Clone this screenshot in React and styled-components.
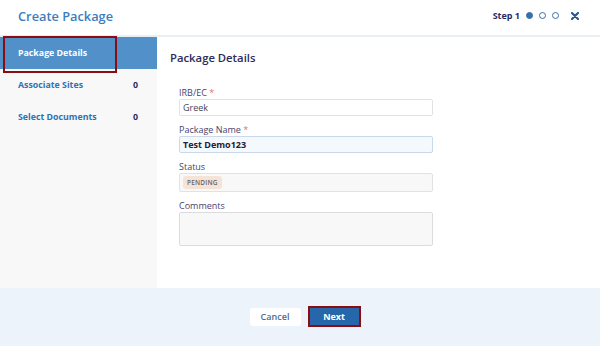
import styled, { createGlobalStyle } from "styled-components";

const GlobalStyle = createGlobalStyle`
  html, body {
    margin: 0;
    padding: 0;
    background: #ffffff;
  }
  * {
    box-sizing: border-box;
  }
`;

const App = () => {
  return (
    <>
      <GlobalStyle />
      <Modal>
        <Header>
          <Title>Create Package</Title>
          <Steps>
            <StepText>Step 1</StepText>
            <Dot $filled />
            <Dot />
            <Dot />
            <Close>
              <svg width="8" height="8" viewBox="0 0 8 8">
                <path d="M1 1 L7 7 M7 1 L1 7" stroke="#2b5a8f" strokeWidth="2.2" strokeLinecap="round" />
              </svg>
            </Close>
          </Steps>
        </Header>
        <Body>
          <Sidebar>
            <SideItem $active>
              <span>Package Details</span>
            </SideItem>
            <SideItem>
              <span>Associate Sites</span>
              <Count>0</Count>
            </SideItem>
            <SideItem>
              <span>Select Documents</span>
              <Count>0</Count>
            </SideItem>
          </Sidebar>
          <Main>
            <Heading>Package Details</Heading>
            <Form>
              <Field>
                <Label>
                  IRB/EC <Req>*</Req>
                </Label>
                <Input>Greek</Input>
              </Field>
              <Field>
                <Label>
                  Package Name <Req>*</Req>
                </Label>
                <Input $focused>Test Demo123</Input>
              </Field>
              <Field>
                <Label>Status</Label>
                <Input $disabled>
                  <Badge>PENDING</Badge>
                </Input>
              </Field>
              <Field>
                <Label>Comments</Label>
                <TextArea />
              </Field>
            </Form>
          </Main>
        </Body>
        <Footer>
          <CancelButton>Cancel</CancelButton>
          <NextButton>Next</NextButton>
        </Footer>
      </Modal>
    </>
  );
};

export default App;

const Modal = styled.div`
  width: 600px;
  height: 346px;
  display: flex;
  flex-direction: column;
  font-family: "Open Sans", "Liberation Sans", sans-serif;
  background: #ffffff;
`;

const Header = styled.div`
  height: 37px;
  flex-shrink: 0;
  display: flex;
  align-items: center;
  justify-content: space-between;
  padding: 0 21px 4px 18px;
  border-bottom: 2px solid #e9eef3;
`;

const Title = styled.div`
  font-size: 12.8px;
  font-weight: 600;
  color: #3b7dc0;
`;

const Steps = styled.div`
  display: flex;
  align-items: center;
  gap: 6px;
`;

const StepText = styled.span`
  font-size: 9px;
  font-weight: 700;
  color: #2e2b5c;
`;

const Dot = styled.span`
  width: 7px;
  height: 7px;
  border-radius: 50%;
  border: 1.3px solid #3a6ea8;
  background: ${(p) => (p.$filled ? "#3a6ea8" : "#ffffff")};
`;

const Close = styled.span`
  display: flex;
  margin-left: 6px;
`;

const Body = styled.div`
  flex: 1;
  display: flex;
  min-height: 0;
`;

const Sidebar = styled.div`
  width: 157px;
  flex-shrink: 0;
  background: #f8f8f8;
  display: flex;
  flex-direction: column;
`;

const SideItem = styled.div`
  position: relative;
  height: 32px;
  display: flex;
  align-items: center;
  justify-content: space-between;
  padding: 0 19px 1px 18px;
  font-size: 8.8px;
  font-weight: 700;
  color: ${(p) => (p.$active ? "#ffffff" : "#2f72b5")};
  background: ${(p) => (p.$active ? "#5190c9" : "transparent")};

  &::after {
    content: "";
    display: ${(p) => (p.$active ? "block" : "none")};
    position: absolute;
    left: 3px;
    top: -1px;
    width: 110px;
    height: 33px;
    border: 2px solid #8b0d12;
  }
`;

const Count = styled.span`
  color: #2e2b5c;
`;

const Main = styled.div`
  flex: 1;
  padding: 12px 0 0 13px;
`;

const Heading = styled.div`
  font-size: 11.3px;
  font-weight: 600;
  color: #2e2b5c;
  line-height: 18px;
`;

const Form = styled.div`
  margin: 20px 0 0 9px;
  width: 254px;
  display: flex;
  flex-direction: column;
  gap: 8px;
`;

const Field = styled.div`
  display: flex;
  flex-direction: column;
`;

const Label = styled.div`
  font-size: 9px;
  line-height: 12px;
  color: #4a3f6e;
`;

const Req = styled.span`
  color: #e0707a;
`;

const Input = styled.div`
  height: ${(p) => (p.$disabled ? "19px" : "17px")};
  display: flex;
  align-items: center;
  padding: 0 3px;
  border-radius: 2px;
  font-size: 9px;
  color: ${(p) => (p.$focused ? "#222235" : "#444455")};
  font-weight: ${(p) => (p.$focused ? 700 : 400)};
  background: ${(p) => (p.$focused ? "#f5f8fc" : p.$disabled ? "#f8f8f8" : "#ffffff")};
  border: 1px solid ${(p) => (p.$focused ? "#c9d8ea" : "#e2e2e2")};
`;

const Badge = styled.span`
  background: #f6e3d8;
  color: #666666;
  font-size: 6.5px;
  font-weight: 600;
  padding: 2px 4px;
  border-radius: 3px;
  letter-spacing: 0.2px;
`;

const TextArea = styled.div`
  height: 34px;
  background: #f8f8f8;
  border: 1px solid #dcdcdc;
  border-radius: 2px;
`;

const Footer = styled.div`
  height: 58px;
  flex-shrink: 0;
  background: #edf3fa;
  display: flex;
  align-items: center;
  justify-content: center;
  gap: 7px;
  padding: 0 0 1px 10px;
`;

const CancelButton = styled.button`
  width: 51px;
  height: 18px;
  border: none;
  border-radius: 3px;
  background: #ffffff;
  color: #4f6a90;
  font-family: inherit;
  font-size: 9px;
  font-weight: 600;
  padding: 0;
`;

const NextButton = styled.button`
  width: 53px;
  height: 21px;
  border: 2px solid #8b0d12;
  background: #2567aa;
  color: #ffffff;
  font-family: inherit;
  font-size: 9px;
  font-weight: 700;
  padding: 0;
`;
